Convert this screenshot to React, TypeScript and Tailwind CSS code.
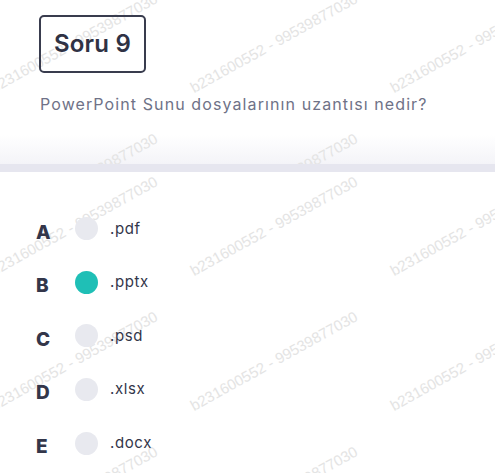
import React from "react";

const options = [
    { key: "A", label: ".pdf" },
    { key: "B", label: ".pptx" },
    { key: "C", label: ".psd" },
    { key: "D", label: ".xlsx" },
    { key: "E", label: ".docx" },
];

const selected = "B";
const mark = "b231600552 - 99539877030";

// watermark start points (left end of the text)
const headerMarks = [
    [-5, 95], [195, 95], [395, 95],
    [-5, 235], [195, 235], [395, 235],
];
const bodyMarks = [
    [-5, 140], [195, 140], [395, 140],
    [-5, 278], [195, 278], [395, 278],
    [-5, 413], [195, 413], [395, 413],
    [-5, 548], [195, 548], [395, 548],
];

const Watermark = ({ points, offset }: { points: number[][]; offset: number }) => (
    <div className="absolute inset-0 overflow-hidden pointer-events-none select-none">
        {points.map(([x, y], i) => (
            <span
                key={i}
                className="absolute whitespace-nowrap text-[15px] leading-none text-[#e4e4e4] origin-bottom-left -rotate-[29deg]"
                style={{ left: x, top: y - offset - 15, fontFamily: "'Liberation Sans', Arial, sans-serif" }}
            >
                {mark}
            </span>
        ))}
    </div>
);

export default function App() {
    return (
        <div className="w-[495px] h-[473px] overflow-hidden bg-white" style={{ fontFamily: "Inter, 'Open Sans', sans-serif" }}>
            {/* Question header */}
            <div className="relative h-[164px] bg-gradient-to-b from-white from-[82%] to-[#f4f4f8]">
                <Watermark points={headerMarks} offset={0} />
                <div className="relative pt-[15px] pl-[39px]">
                    <div className="w-[107px] h-[58px] border-2 border-[#393c4e] rounded-[5px] flex items-center justify-center">
                        <span className="text-[24px] font-semibold text-[#2f3244] tracking-[0.2px]">Soru 9</span>
                    </div>
                    <p className="mt-[19px] pl-px text-[16px] text-[#6f7287] tracking-[1.1px]">
                        PowerPoint Sunu dosyalarının uzantısı nedir?
                    </p>
                </div>
            </div>
            <div className="h-2 bg-[#e6e6ef]" />

            {/* Options */}
            <div className="relative h-[301px]">
                <Watermark points={bodyMarks} offset={172} />
                <div className="relative pt-[30px] flex flex-col">
                    {options.map((o) => (
                        <div key={o.key} className="h-[53.6px] flex items-center">
                            <span className="w-[75px] pl-[36px] pt-2 text-[19px] font-extrabold text-[#33364a]">{o.key}</span>
                            <span
                                className={`w-[23px] h-[23px] rounded-full ${o.key === selected ? "bg-[#1fbfb6]" : "bg-[#e8e9ef]"}`}
                            />
                            <span className="ml-[12px] text-[15px] text-[#33364a] tracking-[0.6px]">{o.label}</span>
                        </div>
                    ))}
                </div>
            </div>
        </div>
    );
}
